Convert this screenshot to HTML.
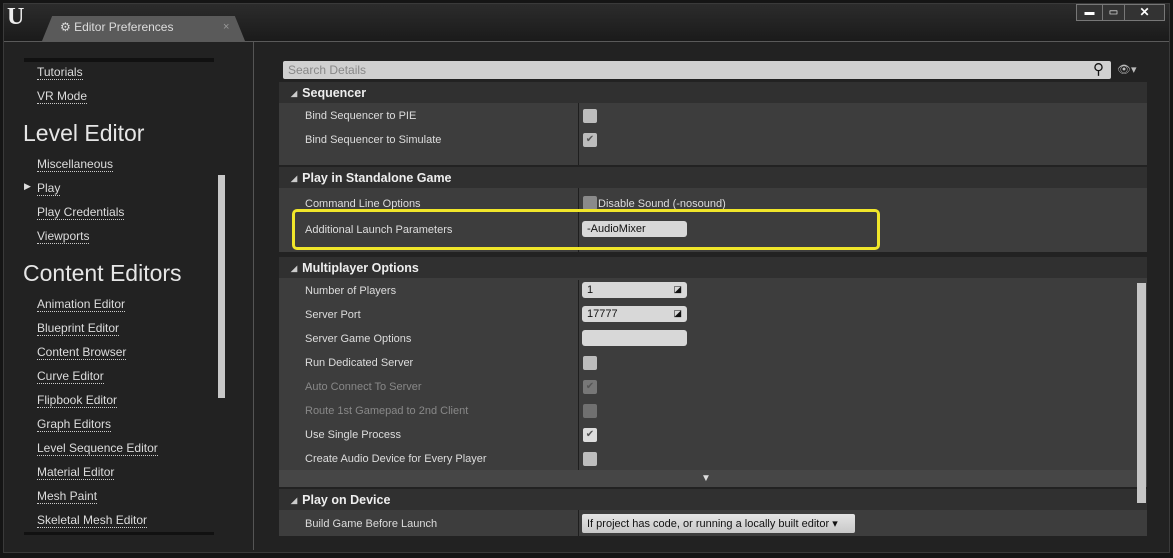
<!DOCTYPE html>
<html><head><style>
*{margin:0;padding:0;box-sizing:border-box}
body{width:1173px;height:558px;background:#151515;font-family:"Liberation Sans",sans-serif;position:relative;overflow:hidden;color:#ddd}
.abs{position:absolute}
.win{left:3px;top:3px;width:1167px;height:550px;background:#222;border:1px solid #3a3a3a}
.top{left:4px;top:4px;width:1165px;height:38px;background:linear-gradient(#2c2c2c,#1a1a1a)}
.tab{left:42px;top:16px;width:203px;height:25px;background:#5a5a5a;clip-path:polygon(5% 0,95% 0,100% 100%,0 100%);border-radius:4px 4px 0 0}
.nav a{position:absolute;left:37px;font-size:12px;color:#ddd;text-decoration:none;border-bottom:1px dotted #ccc;line-height:14px}
.h{position:absolute;left:23px;font-size:23px;color:#e6e6e6}
.lbl{position:absolute;left:305px;font-size:11px;color:#ddd}
.sec{position:absolute;left:279px;width:868px;height:21px;background:#303030;font-size:12.5px;font-weight:bold;color:#eee;padding:4px 0 0 12px}
.sec:before{content:"◢";font-size:8px;margin-right:5px;color:#ccc;vertical-align:1px}
.rows{position:absolute;left:279px;width:868px;background:#3d3d3d}
.cb{position:absolute;left:583px;width:14px;height:14px;background:#bdbdbd;border-radius:2px;font-size:10px;color:#555;text-align:center;line-height:14px}
.in{position:absolute;left:582px;width:105px;height:16px;background:#d8d8d8;border-radius:3px;color:#111;font-size:11px;padding:2px 5px}
</style></head><body>
<div class="abs win"></div>
<div class="abs top"></div>
<div class="abs" style="left:7px;top:4px;font:bold 24px 'Liberation Serif',serif;color:#eee">U</div>
<div class="abs tab"></div>
<div class="abs" style="left:60px;top:20px;font-size:12px;color:#ddd">⚙ Editor Preferences</div>
<div class="abs" style="left:223px;top:21px;font-size:11px;color:#999">×</div>
<div class="abs" style="left:1076px;top:4px;width:27px;height:17px;border:1px solid #777;background:#333;color:#fff;font-size:10px;text-align:center;line-height:15px">▬</div>
<div class="abs" style="left:1102px;top:4px;width:23px;height:17px;border:1px solid #777;background:#333;color:#fff;font-size:10px;text-align:center;line-height:15px">▭</div>
<div class="abs" style="left:1124px;top:4px;width:41px;height:17px;border:1px solid #777;background:#333;color:#fff;font-size:12px;font-weight:bold;text-align:center;line-height:15px">✕</div>
<div class="abs" style="left:4px;top:41px;width:1165px;height:1px;background:#5a5a5a"></div>
<div class="abs" style="left:24px;top:58px;width:190px;height:4px;background:#111"></div>
<div class="abs" style="left:24px;top:532px;width:190px;height:3px;background:#111"></div>
<div class="abs" style="left:218px;top:175px;width:7px;height:223px;background:#c8c8c8"></div>
<div class="abs" style="left:253px;top:42px;width:1px;height:508px;background:#555"></div>
<div class="nav">
<a style="top:65px">Tutorials</a><a style="top:89px">VR Mode</a>
<div class="h" style="top:120px">Level Editor</div>
<a style="top:157px">Miscellaneous</a><span class="abs" style="left:24px;top:181px;font-size:9px">▶</span><a style="top:181px">Play</a><a style="top:205px">Play Credentials</a><a style="top:229px">Viewports</a>
<div class="h" style="top:260px">Content Editors</div>
<a style="top:297px">Animation Editor</a><a style="top:321px">Blueprint Editor</a><a style="top:345px">Content Browser</a><a style="top:369px">Curve Editor</a><a style="top:393px">Flipbook Editor</a><a style="top:417px">Graph Editors</a><a style="top:441px">Level Sequence Editor</a><a style="top:465px">Material Editor</a><a style="top:489px">Mesh Paint</a><a style="top:513px">Skeletal Mesh Editor</a>
</div>
<div class="abs" style="left:283px;top:61px;width:828px;height:18px;background:#d0d0d0;border-radius:2px;font-size:12px;color:#888;padding:2px 5px">Search Details</div>
<div class="abs" style="left:1093px;top:60px;font-size:15px;color:#111">⚲</div>
<div class="abs" style="left:1117px;top:63px;font-size:11px;color:#bbb">👁▾</div>
<div class="sec" style="top:82px">Sequencer</div>
<div class="rows" style="top:103px;height:62px"></div>
<div class="sec" style="top:167px">Play in Standalone Game</div>
<div class="rows" style="top:188px;height:64px"></div>
<div class="sec" style="top:257px">Multiplayer Options</div>
<div class="rows" style="top:278px;height:192px"></div>
<div class="abs" style="left:279px;top:470px;width:868px;height:17px;background:#464646"></div>
<div class="abs" style="left:701px;top:473px;font-size:10px;color:#ddd">▼</div>
<div class="sec" style="top:489px">Play on Device</div>
<div class="rows" style="top:510px;height:26px"></div>
<div class="abs" style="left:578px;top:103px;width:1px;height:62px;background:#1e1e1e"></div>
<div class="abs" style="left:578px;top:188px;width:1px;height:64px;background:#1e1e1e"></div>
<div class="abs" style="left:578px;top:280px;width:1px;height:190px;background:#1e1e1e"></div>
<div class="abs" style="left:578px;top:510px;width:1px;height:26px;background:#1e1e1e"></div>
<div class="abs" style="left:1137px;top:283px;width:9px;height:220px;background:#c6c6c6"></div>
<div class="lbl" style="top:110px">Bind Sequencer to PIE</div><div class="cb" style="top:109px"></div>
<div class="lbl" style="top:134px">Bind Sequencer to Simulate</div><div class="cb" style="top:133px">✔</div>
<div class="lbl" style="top:198px">Command Line Options</div><div class="cb" style="top:196px;background:#8a8a8a"></div><div class="abs" style="left:598px;top:198px;font-size:11px">Disable Sound (-nosound)</div>
<div class="lbl" style="top:224px">Additional Launch Parameters</div><div class="in" style="top:221px">-AudioMixer</div>
<div class="abs" style="left:292px;top:209px;width:588px;height:41px;border:3px solid #f0e62a;border-radius:5px"></div>
<div class="lbl" style="top:285px">Number of Players</div><div class="in" style="top:282px">1<span style="float:right;font-size:9px">◪</span></div>
<div class="lbl" style="top:309px">Server Port</div><div class="in" style="top:306px">17777<span style="float:right;font-size:9px">◪</span></div>
<div class="lbl" style="top:333px">Server Game Options</div><div class="in" style="top:330px"></div>
<div class="lbl" style="top:357px">Run Dedicated Server</div><div class="cb" style="top:356px"></div>
<div class="lbl" style="top:381px;color:#888">Auto Connect To Server</div><div class="cb" style="top:380px;background:#777">✔</div>
<div class="lbl" style="top:405px;color:#888">Route 1st Gamepad to 2nd Client</div><div class="cb" style="top:404px;background:#707070"></div>
<div class="lbl" style="top:429px">Use Single Process</div><div class="cb" style="top:428px;background:#ddd">✔</div>
<div class="lbl" style="top:453px">Create Audio Device for Every Player</div><div class="cb" style="top:452px"></div>
<div class="lbl" style="top:518px">Build Game Before Launch</div>
<div class="abs" style="left:582px;top:514px;width:273px;height:19px;background:linear-gradient(#e4e4e4,#c8c8c8);border-radius:2px;color:#111;font-size:11px;padding:3px 5px">If project has code, or running a locally built editor ▾</div>
</body></html>
